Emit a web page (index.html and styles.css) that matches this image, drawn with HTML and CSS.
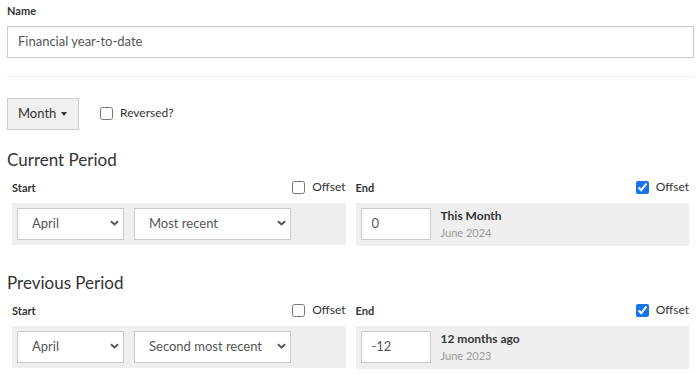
FILE: index.html
```html
<!DOCTYPE html>
<html lang="en">
<head>
  <meta charset="UTF-8" />
  <title>Period editor</title>
  <link rel="stylesheet" href="styles.css">
</head>
<body>
  <div class="editor">
    <label class="field-label">Name</label>
    <input type="text" class="name-input" value="Financial year-to-date" />

    <hr class="divider" />

    <div class="toolbar">
      <button type="button" class="unit-button">Month <span class="caret"></span></button>
      <label class="check"><input type="checkbox" /> Reversed?</label>
    </div>

    <!-- current period -->
    <h2 class="period-title">Current Period</h2>
    <div class="period-row">
      <div class="period-col">
        <div class="col-head">
          <span class="col-label">Start</span>
          <label class="check"><input type="checkbox" /> Offset</label>
        </div>
        <div class="panel">
          <div class="select-wrap month-select">
            <select><option>April</option></select>
            <svg class="chevron" viewBox="0 0 10 6"><path d="M1 1 L5 4.6 L9 1" /></svg>
          </div>
          <div class="select-wrap which-select">
            <select><option>Most recent</option></select>
            <svg class="chevron" viewBox="0 0 10 6"><path d="M1 1 L5 4.6 L9 1" /></svg>
          </div>
        </div>
      </div>
      <div class="period-col">
        <div class="col-head">
          <span class="col-label">End</span>
          <label class="check"><input type="checkbox" checked /> Offset</label>
        </div>
        <div class="panel">
          <input type="text" class="offset-input" value="0" />
          <div class="offset-info">
            <div class="offset-name">This Month</div>
            <div class="offset-date">June 2024</div>
          </div>
        </div>
      </div>
    </div>

    <!-- previous period -->
    <h2 class="period-title second">Previous Period</h2>
    <div class="period-row">
      <div class="period-col">
        <div class="col-head">
          <span class="col-label">Start</span>
          <label class="check"><input type="checkbox" /> Offset</label>
        </div>
        <div class="panel">
          <div class="select-wrap month-select">
            <select><option>April</option></select>
            <svg class="chevron" viewBox="0 0 10 6"><path d="M1 1 L5 4.6 L9 1" /></svg>
          </div>
          <div class="select-wrap which-select">
            <select><option>Second most recent</option></select>
            <svg class="chevron" viewBox="0 0 10 6"><path d="M1 1 L5 4.6 L9 1" /></svg>
          </div>
        </div>
      </div>
      <div class="period-col">
        <div class="col-head">
          <span class="col-label">End</span>
          <label class="check"><input type="checkbox" checked /> Offset</label>
        </div>
        <div class="panel">
          <input type="text" class="offset-input" value="-12" />
          <div class="offset-info">
            <div class="offset-name">12 months ago</div>
            <div class="offset-date">June 2023</div>
          </div>
        </div>
      </div>
    </div>
  </div>
</body>
</html>
```

FILE: styles.css
```css
body {
  font-family: Lato, "Open Sans", sans-serif;
  color: #333;
  background: #fff;
  margin: 0;
  padding: 0;
}

.editor {
  width: 687px;
  margin-left: 7px;
}

.field-label {
  display: block;
  font-size: 11px;
  font-weight: bold;
  line-height: 16px;
  margin-top: 3px;
  margin-bottom: 7px;
}

.name-input {
  display: block;
  width: 100%;
  height: 32px;
  box-sizing: border-box;
  border: 1px solid #ccc;
  box-shadow: inset 0 1px 1px rgba(0,0,0,0.05);
  padding: 0 10px 2px;
  font-family: inherit;
  font-size: 13px;
  color: #555;
  margin: 0;
}

.divider {
  border: none;
  border-top: 1px solid #eee;
  margin: 18px 0 21px;
}

.toolbar {
  display: flex;
  align-items: center;
  gap: 21px;
  height: 32px;
}

.unit-button {
  height: 32px;
  width: 72px;
  box-sizing: border-box;
  background: #eff0ef;
  border: 1px solid #ccc;
  border-radius: 0;
  font-family: inherit;
  font-size: 13px;
  color: #333;
  padding: 0 0 2px 10px;
  text-align: left;
  display: flex;
  align-items: center;
  gap: 5px;
}

.caret {
  width: 0;
  height: 0;
  border-left: 3.5px solid transparent;
  border-right: 3.5px solid transparent;
  border-top: 4px solid #333;
  margin-top: 2px;
}

.check {
  display: flex;
  align-items: center;
  font-size: 12px;
  color: #333;
  line-height: 20px;
}

.toolbar .check {
  margin-top: -2px;
}

.check input {
  width: 13px;
  height: 13px;
  margin: 0 7px 0 0;
  accent-color: #1a73e8;
}

.period-title {
  font-size: 17px;
  font-weight: normal;
  line-height: 20px;
  margin: 20px 0 7px;
}

.period-title.second {
  margin-top: 27px;
}

.period-row {
  display: flex;
}

.period-col {
  flex: 1;
  padding: 0 5px;
}

.col-head {
  display: flex;
  justify-content: space-between;
  align-items: center;
  height: 20px;
  margin-bottom: 6px;
}

.col-label {
  font-size: 11px;
  font-weight: bold;
}

.panel {
  background: #eeefee;
  padding: 5px;
  display: flex;
  align-items: flex-start;
  gap: 10px;
}

.select-wrap {
  position: relative;
  height: 32px;
}

.month-select {
  width: 107px;
}

.which-select {
  width: 157px;
}

.select-wrap select {
  appearance: none;
  -webkit-appearance: none;
  width: 100%;
  height: 32px;
  box-sizing: border-box;
  border: 1px solid #ccc;
  border-radius: 0;
  background: #fff;
  font-family: inherit;
  font-size: 13px;
  color: #555;
  padding: 0 0 3px 14px;
  margin: 0;
}

.chevron {
  position: absolute;
  right: 5px;
  top: 12px;
  width: 9px;
  height: 6px;
  fill: none;
  stroke: #555;
  stroke-width: 2.2;
  pointer-events: none;
}

.offset-input {
  width: 70px;
  height: 32px;
  box-sizing: border-box;
  border: 1px solid #ccc;
  padding: 0 10px 3px;
  font-family: inherit;
  font-size: 13px;
  color: #555;
  margin: 0;
}

.offset-name {
  font-size: 12px;
  font-weight: bold;
  line-height: 16px;
}

.offset-date {
  font-size: 11px;
  color: #999;
  line-height: 16px;
  margin-top: 1px;
}
```
